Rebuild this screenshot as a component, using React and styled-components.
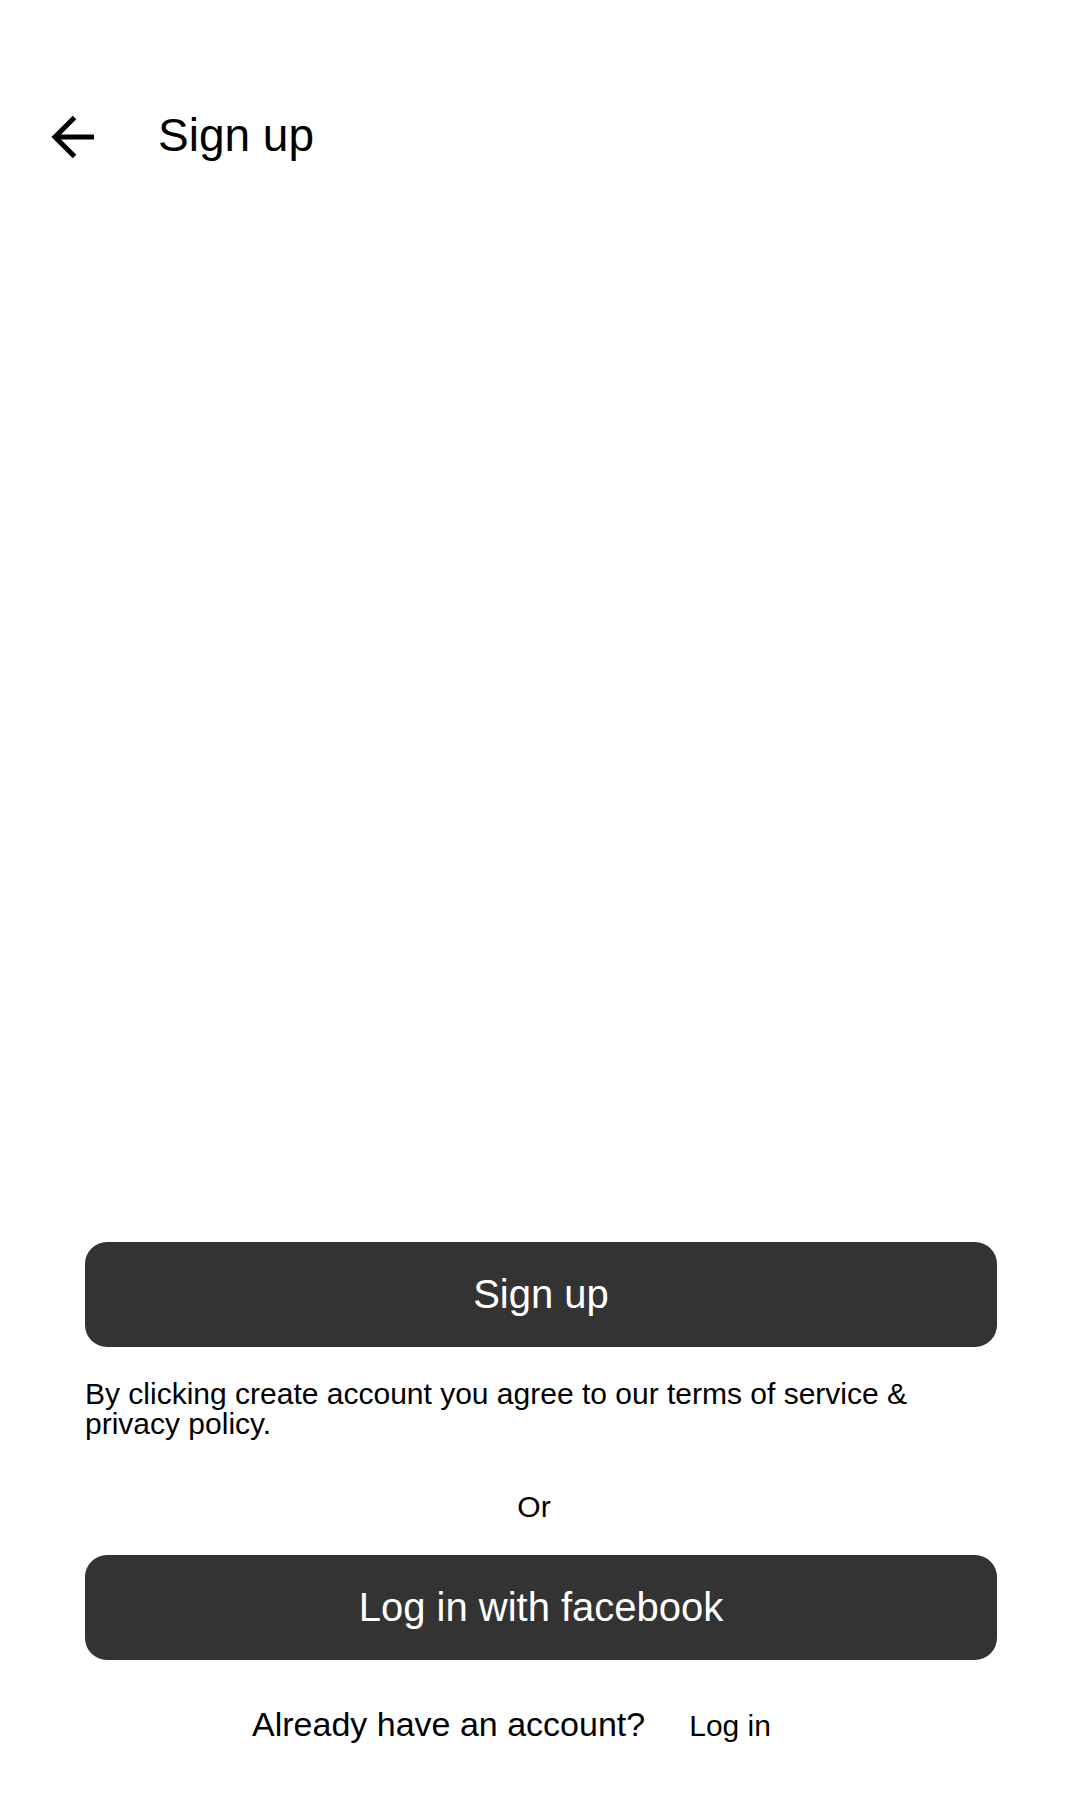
import React from 'react';
import styled, { createGlobalStyle } from 'styled-components';

const GlobalStyle = createGlobalStyle`
  html, body {
    margin: 0;
    padding: 0;
    background: #ffffff;
  }

  body {
    font-family: 'Liberation Sans', Arial, sans-serif;
    color: #000000;
  }

  * {
    box-sizing: border-box;
  }
`;

const Screen = styled.div`
  display: flex;
  flex-direction: column;
  min-height: 100vh;
`;

const Header = styled.header`
  display: flex;
  align-items: center;
  gap: 54px;
  padding: 106px 0 0 43px;
`;

const BackButton = styled.button`
  display: flex;
  align-items: center;
  justify-content: center;
  width: 61px;
  height: 61px;
  padding: 0;
  border: none;
  background: transparent;
  cursor: pointer;
`;

const Title = styled.h1`
  margin: 0 0 4px;
  font-size: 46px;
  line-height: 46px;
  font-weight: 400;
`;

const Spacer = styled.div`
  flex: 1;
`;

const Footer = styled.footer`
  display: flex;
  flex-direction: column;
  padding: 0 83px 54px 85px;
`;

const PrimaryButton = styled.button`
  width: 100%;
  height: 105px;
  margin-top: ${(props) => props.$top || 0}px;
  border: none;
  border-radius: 22px;
  background: #333333;
  color: #ffffff;
  font-family: 'Liberation Sans', Arial, sans-serif;
  font-size: 40px;
  cursor: pointer;
`;

const Terms = styled.p`
  margin: 32px 0 0;
  font-size: 30px;
  line-height: 30px;
`;

const Divider = styled.div`
  margin: 51px 0 0;
  padding-right: 14px;
  text-align: center;
  font-size: 30px;
  line-height: 34px;
`;

const AccountRow = styled.div`
  display: flex;
  justify-content: center;
  align-items: baseline;
  margin-top: 44px;
  padding-right: 15px;
`;

const AccountText = styled.span`
  font-size: 34px;
  line-height: 40px;
`;

const LinkButton = styled.button`
  padding: 0 44px;
  border: none;
  background: transparent;
  color: #000000;
  font-family: 'Liberation Sans', Arial, sans-serif;
  font-size: 30px;
  line-height: 40px;
  cursor: pointer;
`;

const BackArrow = () => (
  <svg width="61" height="61" viewBox="0 0 61 61" fill="none">
    <path d="M51 31H13" stroke="#000" strokeWidth="5" />
    <path
      d="M31.5 11.5L12 31l19.5 19.5"
      stroke="#000"
      strokeWidth="5"
      strokeLinejoin="miter"
    />
  </svg>
);

const App = () => {
  return (
    <Screen>
      <GlobalStyle />

      <Header>
        <BackButton aria-label="Back">
          <BackArrow />
        </BackButton>
        <Title>Sign up</Title>
      </Header>

      <Spacer />

      <Footer>
        <PrimaryButton>Sign up</PrimaryButton>

        <Terms>
          By clicking create account you agree to our terms of service &amp;
          privacy policy.
        </Terms>

        <Divider>Or</Divider>

        <PrimaryButton $top={31}>Log in with facebook</PrimaryButton>

        <AccountRow>
          <AccountText>Already have an account?</AccountText>
          <LinkButton>Log in</LinkButton>
        </AccountRow>
      </Footer>
    </Screen>
  );
};

export default App;
